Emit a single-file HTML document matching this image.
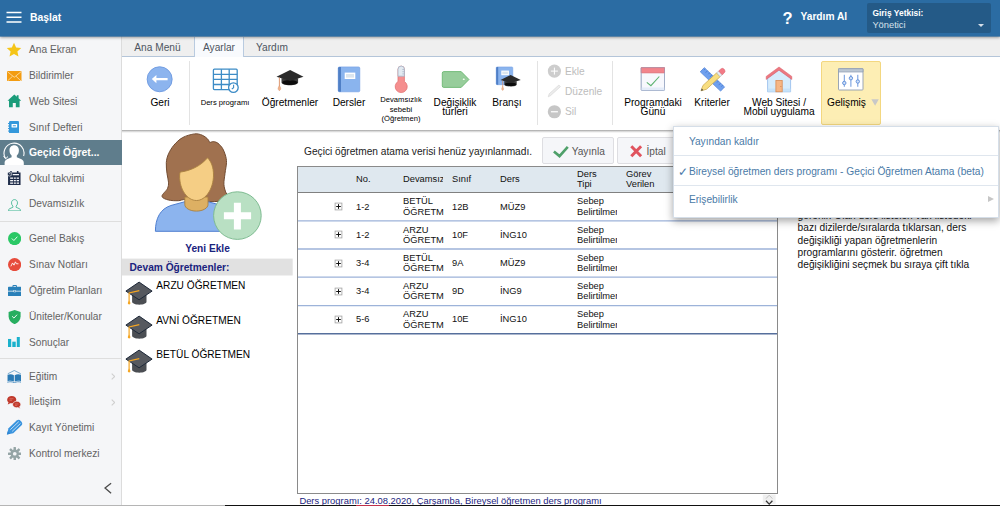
<!DOCTYPE html>
<html><head><meta charset="utf-8">
<style>
*{box-sizing:border-box;margin:0;padding:0}
html,body{width:1000px;height:506px;overflow:hidden;background:#fff;font-family:"Liberation Sans",Arial,sans-serif;font-size:12px;color:#000}
.abs{position:absolute}
#hdr{position:absolute;left:0;top:0;width:1000px;height:36px;background:#2b6ca3;box-shadow:0 1.6px 3px rgba(0,0,0,.4);z-index:5}
#hdr .t{position:absolute;left:30px;top:10.8px;font-weight:bold;font-size:12px;color:#fff;line-height:14px}
#side{position:absolute;left:0;top:36px;width:122px;height:469px;background:#f5f6f8;border-right:1px solid #dcdcdc}
.si{position:absolute;left:0;width:121px;height:26px;line-height:26px;color:#636363;font-size:12px;padding-left:29px;white-space:nowrap}
.si.sel{color:#fff;font-weight:bold;font-size:10.4px}
.si svg{position:absolute;left:6px;top:5px}
.sep{position:absolute;left:0;width:121px;height:1px;background:#dedede}
#tabs{position:absolute;left:122px;top:36px;width:878px;height:21px;background:#efefef;border-bottom:1px solid #b4c5d9}
.tab{position:absolute;top:1px;height:20px;line-height:21.6px;font-size:12px;color:#4d5560;text-align:center}
.tab.act{background:#f8fafd;border:1px solid #b9cbe0;border-top:none;border-bottom:none;height:21px}
#rib{position:absolute;left:122px;top:57px;width:878px;height:73.2px;background:#fff}
#ribsh{position:absolute;left:122px;top:130.2px;width:878px;height:3.2px;background:linear-gradient(to bottom,rgba(0,0,0,.36),rgba(0,0,0,.12) 55%,rgba(0,0,0,0))}
.rb{position:absolute;text-align:center;font-size:12px;line-height:9px;color:#000;white-space:nowrap}
.vs{position:absolute;top:61px;width:1px;height:64px;background:#e3e3e3}

body{font-size:10.17px}
.si{font-size:10.17px}
.tab{font-size:10.17px}
.rb{font-size:10.17px}
.rb.sm{font-size:7.63px}
.rb.dis{color:#bdbdbd}
#hdr .t{font-size:10.4px}
.btn{position:absolute;top:137.200px;height:27.200px;background:#f5f6f9;border:1px solid #dedee2;border-radius:2px;color:#555;line-height:12px}
#tbl{position:absolute;left:297px;top:166px;width:481px;height:328px;border:1px solid #8a8a8a;background:#fff;font-size:9.32px;line-height:10.2px;color:#111}
#tbl .th{position:absolute;left:0;top:0;width:479px;height:26px;background:#dfe8ef;border-bottom:1px solid #808080}
#tbl span{position:absolute;white-space:nowrap}
#tbl .tr{position:absolute;left:0;width:479px;height:28.24px}
#tbl .tr i{position:absolute;left:36.2px;top:9.400px;width:8px;height:8px;border:1px solid #a5a5a5;background:#fff}
#tbl .tr i:before{content:"";position:absolute;left:1px;top:2.5px;width:4px;height:1px;background:#222}
#tbl .tr i:after{content:"";position:absolute;left:2.5px;top:1px;width:1px;height:4px;background:#222}
#tbl .cl{width:40px;overflow:hidden}
#menu{position:absolute;left:673.3px;top:126px;width:326px;height:91.8px;background:#fff;border:1px solid #d5dee8;box-shadow:0 3px 8px rgba(0,0,0,.36);z-index:10;overflow:hidden}
.mi{position:absolute;left:0;width:326px;padding-left:14.6px;color:#4a7aa7;white-space:nowrap;font-size:10.2px}
</style></head><body>
<div id="hdr">
 <svg class="abs" style="left:6px;top:11px" width="16" height="13"><g stroke="#fff" stroke-width="1.6"><path d="M0.5 1.5h15M0.5 6.3h15M0.5 11h15"/></g></svg>
 <div class="t">Başlat</div>
 <div class="abs" style="left:782.6px;top:8.6px;color:#fff;font-weight:bold;font-size:16.5px;line-height:19px">?</div>
 <div class="abs" style="left:800.5px;top:11.4px;color:#fff;font-weight:bold;font-size:10.2px">Yardım Al</div>
 <div class="abs" style="left:867px;top:3px;width:124px;height:30px;background:#245a87;border-radius:2px"></div>
 <div class="abs" style="left:872.4px;top:7.6px;color:#fff;font-weight:bold;font-size:8.45px;line-height:10px">Giriş Yetkisi:</div>
 <div class="abs" style="left:872.4px;top:19.6px;color:#d7e2ec;font-size:9.32px;line-height:11px">Yönetici</div>
 <div class="abs" style="left:978px;top:23.8px;border-left:3.6px solid transparent;border-right:3.6px solid transparent;border-top:3.6px solid #d5dfe9;width:0;height:0"></div>
</div>
<div class="abs" style="left:0;top:36px;width:1000px;height:1px;background:rgba(43,108,163,.62);z-index:6"></div>
<div id="side">
<div class="abs" style="left:0;top:104px;width:122px;height:24.8px;background:#5f7d8c"></div>
 <div class="si" style="top:1.12px">Ana Ekran</div>
 <div class="si" style="top:26.82px">Bildirimler</div>
 <div class="si" style="top:52.92px">Web Sitesi</div>
 <div class="si" style="top:78.82px">Sınıf Defteri</div>
 <div class="si sel" style="top:104.42px">Geçici Öğret...</div>
 <div class="si" style="top:130.02px">Okul takvimi</div>
 <div class="si" style="top:155.42px">Devamsızlık</div>
 <div class="sep" style="top:185px"></div>
 <div class="si" style="top:190.37px">Genel Bakış</div>
 <div class="si" style="top:216.02px">Sınav Notları</div>
 <div class="si" style="top:242.02px">Öğretim Planları</div>
 <div class="si" style="top:267.72px">Üniteler/Konular</div>
 <div class="si" style="top:293.82px">Sonuçlar</div>
 <div class="sep" style="top:322px"></div>
 <div class="si" style="top:327.87px">Eğitim</div>
 <div class="si" style="top:352.92px">İletişim</div>
 <div class="si" style="top:379.02px">Kayıt Yönetimi</div>
 <div class="si" style="top:404.72px">Kontrol merkezi</div>
<svg class="abs" style="left:6.1px;top:6.1px" width="16" height="15.5" viewBox="0 0 24 23" preserveAspectRatio="none"><path d="M12 1.2l3.2 7 7.6.8-5.7 5.1 1.6 7.5L12 17.8 5.3 21.6l1.6-7.5L1.2 9l7.6-.8z" fill="#f5c518"/></svg>
<svg class="abs" style="left:7px;top:34.5px" width="14.5" height="10.5" viewBox="0 0 29 21"><rect width="29" height="21" rx="1.5" fill="#f39c12"/><path d="M1 1.5l13.5 11L28 1.5M1 20l10-9.5M28 20l-10-9.5" stroke="#fde3b5" stroke-width="1.6" fill="none"/></svg>
<svg class="abs" style="left:6.8px;top:58.3px" width="14.6" height="13.8" viewBox="0 0 29 26" preserveAspectRatio="none"><path d="M14.5 1L1 12.5h3V25h7.5v-8h6v8H25V12.5h3L23 8.2V2.5h-3.5v2.7z" fill="#1a9c7a"/></svg>
<svg class="abs" style="left:8.3px;top:84.6px" width="11.2" height="12.6" viewBox="0 0 22 25" preserveAspectRatio="none"><rect x="2" y="0" width="20" height="25" rx="2.5" fill="#3498db"/><rect x="0" y="4" width="3" height="2" fill="#3498db"/><rect x="0" y="9" width="3" height="2" fill="#3498db"/><rect x="0" y="14" width="3" height="2" fill="#3498db"/><rect x="0" y="19" width="3" height="2" fill="#3498db"/><rect x="7" y="6" width="11" height="7" rx="1" fill="#fff"/><rect x="9.5" y="8.5" width="6" height="2" fill="#3498db"/></svg>
<svg class="abs" style="left:6.7px;top:135px" width="14.6" height="14.5" viewBox="0 0 28 29" preserveAspectRatio="none"><path d="M2 3h24v25H2z" fill="#1f2d4a"/><rect x="6" y="0" width="3" height="6" fill="#1f2d4a"/><rect x="19" y="0" width="3" height="6" fill="#1f2d4a"/><circle cx="5" cy="6" r="4.2" fill="#1f2d4a" stroke="#f5f6f8" stroke-width="1.2"/><path d="M5 3.5V6h2.2" stroke="#f5f6f8" stroke-width="1.1" fill="none"/><g fill="#f5f6f8"><rect x="11" y="6" width="12" height="2.5"/><rect x="6" y="13" width="17" height="2.6"/><rect x="6" y="18" width="17" height="2.6"/><rect x="6" y="23" width="17" height="2.6"/></g><g fill="#1f2d4a"><rect x="11.5" y="12" width="1.5" height="15"/><rect x="17" y="12" width="1.5" height="15"/></g></svg>
<svg class="abs" style="left:8px;top:162.5px" width="13" height="12.5" viewBox="0 0 26 25"><path d="M13 1.2c-3.6 0-6 2.8-6 6.6 0 2.600 1 5 2.800 6.400v2.300L3 19.500c-1.200.6-1.800 1.500-1.800 2.800v1.500h23.600v-1.500c0-1.300-.6-2.200-1.800-2.800l-6.800-3v-2.300c1.800-1.400 2.800-3.800 2.800-6.400 0-3.800-2.400-6.600-6-6.600z" fill="none" stroke="#3db590" stroke-width="1.7"/></svg>
<svg class="abs" style="left:7.5px;top:196px" width="13.2" height="13.2" viewBox="0 0 24 24"><circle cx="12" cy="12" r="12" fill="#2bc866"/><path d="M7.500 12.300l3.200 3.200 5.800-6.400" stroke="#fff" stroke-width="1.600" fill="none" stroke-linecap="round" stroke-linejoin="round"/></svg>
<svg class="abs" style="left:7.5px;top:221.5px" width="13.2" height="13.2" viewBox="0 0 24 24"><circle cx="12" cy="12" r="12" fill="#e74c3c"/><path d="M5.500 14.500l2.800-5.500 2.700 4 2.500-6 1.800 3.500h3" stroke="#fff" stroke-width="1.600" fill="none" stroke-linejoin="round" stroke-linecap="round"/><text x="6.500" y="17.500" font-size="9" font-family="Liberation Sans" font-weight="bold" fill="#fff"></text></svg>
<svg class="abs" style="left:7.5px;top:248.5px" width="13.4" height="11.5" viewBox="0 0 27 23"><path d="M9 3.500V1.800C9 .8 9.800 0 10.800 0h5.400c1 0 1.800.8 1.800 1.800v1.700h7c1.100 0 2 .9 2 2V21c0 1.100-.9 2-2 2H2c-1.100 0-2-.9-2-2V5.500c0-1.100.9-2 2-2zm2 0h5V2h-5z" fill="#2980b9"/><rect x="0" y="11.500" width="27" height="1.600" fill="#f5f6f8"/><rect x="11" y="10" width="5" height="4.500" rx="1" fill="#f5f6f8"/><rect x="12" y="11" width="3" height="2.500" fill="#2980b9"/></svg>
<svg class="abs" style="left:7.5px;top:273.5px" width="13.2" height="14.2" viewBox="0 0 24 26"><path d="M12 0l11 3.800v7.500c0 7-4.500 11.700-11 14.700C5.500 23 1 18.300 1 11.300V3.800z" fill="#27ae60"/><path d="M8 12l2.800 2.800 5.200-5.600" stroke="#fff" stroke-width="1.700" fill="none" stroke-linecap="round" stroke-linejoin="round"/></svg>
<svg class="abs" style="left:8.2px;top:300.6px" width="11.8" height="10.8" preserveAspectRatio="none" viewBox="0 0 22 22"><rect x="0" y="4" width="6" height="18" fill="#1ab1cc"/><rect x="8" y="9.500" width="6.400" height="12.500" fill="#1ab1cc"/><rect x="16.400" y="0" width="5.600" height="22" fill="#1ab1cc"/></svg>
<svg class="abs" style="left:6.8px;top:333.5px" width="14.6" height="13.5" viewBox="0 0 29 27"><path d="M14.500 1L1.500 7.500" stroke="#2a7ab5" stroke-width="1.200" fill="none"/><path d="M14.500 1l13 6.500" stroke="#2a7ab5" stroke-width="1.200" fill="none"/><path d="M1 9.500c4.500-1.800 9-1.500 12.700.8v12.500C10 21 5.500 20.800 1 22.300z" fill="#2a7ab5"/><path d="M28 9.500c-4.500-1.800-9-1.500-12.700.8v12.500c3.700-1.800 8.200-2 12.700-.5z" fill="#2a7ab5"/><path d="M0.500 24.500c5-1.600 9.500-1.300 14 .9 4.500-2.200 9-2.500 14-.9" stroke="#2a7ab5" stroke-width="1.500" fill="none"/></svg>
<svg class="abs" style="left:7.3px;top:359.8px" width="14.2" height="13.2" viewBox="0 0 28.500 26.500"><path d="M9.500 0C4.300 0 .3 3.300.3 7.400c0 2.100 1 4 2.700 5.300L1.500 17l5-2.600c1 .3 2 .4 3 .4 5.200 0 9.200-3.300 9.200-7.400S14.700 0 9.500 0z" fill="#c0392b"/><path d="M19.500 10.500c4.600 0 8.200 2.800 8.200 6.400 0 1.800-.9 3.400-2.400 4.600l1.300 4.200-4.500-2.400c-.8.200-1.700.3-2.600.3-4.600 0-8.200-2.800-8.200-6.400s3.600-6.700 8.200-6.700z" fill="#c0392b" stroke="#f5f6f8" stroke-width="1.300"/><g stroke="#e58a80" stroke-width="1.200"><path d="M5 5.500h8M5 8.500h5"/><path d="M16 16h7M16 18.800h4.500"/></g></svg>
<svg class="abs" style="left:5px;top:383px" width="18" height="17" viewBox="5 419 18 17"><g transform="translate(6.900 434.600) rotate(-43.600)"><path d="M0 0L5.500-3.400h11.200a2.800 3.400 0 0 1 0 6.800H5.500z" fill="#3a94de"/><path d="M6-1.200h11.500M6 1.300h11.500" stroke="#c4e0f7" stroke-width=".9" fill="none"/><path d="M0 0l3-1.850v3.700z" fill="#2f86d2"/></g></svg>
<svg class="abs" style="left:7.5px;top:410.5px" width="13.5" height="13.5" viewBox="0 0 24 24"><g fill="#95a5a6"><circle cx="12" cy="12" r="7.500"/><g id="t"><rect x="9.800" y="0" width="4.400" height="24" rx="1"/></g><rect x="9.800" y="0" width="4.400" height="24" rx="1" transform="rotate(45 12 12)"/><rect x="9.800" y="0" width="4.400" height="24" rx="1" transform="rotate(90 12 12)"/><rect x="9.800" y="0" width="4.400" height="24" rx="1" transform="rotate(135 12 12)"/></g><circle cx="12" cy="12" r="3.300" fill="#f5f6f8"/></svg>
<svg class="abs" style="left:110.5px;top:337.2px" width="4.5" height="7" viewBox="0 0 4.5 7"><path d="M.7.700l3 2.800-3 2.800" stroke="#cfcfcf" stroke-width="1.100" fill="none"/></svg>
<svg class="abs" style="left:110.5px;top:362.7px" width="4.5" height="7" viewBox="0 0 4.5 7"><path d="M.7.700l3 2.800-3 2.800" stroke="#cfcfcf" stroke-width="1.100" fill="none"/></svg>
<svg class="abs" style="left:103.5px;top:445px" width="9" height="15" viewBox="0 0 9 15"><path d="M7.100 2.200L1 7.100l6.100 5.200" stroke="#4a4a4a" stroke-width="1.300" fill="none"/></svg>
<svg class="abs" style="left:3px;top:104.5px" width="22" height="24.5" viewBox="0 0 22 24.5"><defs><clipPath id="cp"><rect x="0" y="0" width="22" height="24.300"/></clipPath></defs><g clip-path="url(#cp)"><path d="M2.600 17.500A10 10 0 1 1 20.600 15" fill="none" stroke="#fff" stroke-width="1.100"/><path d="M0.600 15.200l2 2.600 2.400-2.200" stroke="#fff" stroke-width="1" fill="none"/><path d="M11.200 4.200c-2.900 0-4.700 2.200-4.700 5.200 0 2.100.8 3.900 2.100 5v1.800l-4.700 2.100c-1.500.700-2.300 2-2.300 3.600v3h19.200v-3c0-1.600-.8-2.900-2.300-3.600l-4.700-2.100v-1.800c1.300-1.100 2.100-2.900 2.100-5 0-3-1.800-5.200-4.700-5.200z" fill="#fff"/></g></svg>
 </div>
<div id="tabs">
 <div class="tab" style="left:0;width:71px">Ana Menü</div>
 <div class="tab act" style="left:72px;width:50px">Ayarlar</div>
 <div class="tab" style="left:123px;width:54px">Yardım</div>
</div>
<div id="rib"></div><div id="ribsh"></div>
<!-- ribbon items -->
<div class="vs" style="left:189px"></div>
<div class="vs" style="left:537px"></div>
<div class="vs" style="left:612px"></div>
<div id="adv" class="abs" style="left:821px;top:61px;width:60px;height:64px;background:#fdeeb4;border:1px solid #f3d780;border-radius:2px"></div>
<svg class="abs" style="left:145px;top:65px" width="30" height="29" viewBox="145 65 30 29"><circle cx="159.650" cy="79.250" r="12.500" fill="#8cb4ee" stroke="#6c98e0" stroke-width=".9"/><path d="M151.800 79.100l4.600-4v3h11.200v2.100h-11.200v3z" fill="#fff"/></svg>
<svg class="abs" style="left:212px;top:67px" width="28" height="27" viewBox="212 67 28 27"><g fill="none" stroke="#3d8cc6" stroke-width="1.300"><rect x="213.400" y="69.200" width="23.800" height="20.400" rx="1"/><path d="M221.400 69.200v20.400M229.200 69.200v20.400M213.400 74.300h23.800M213.400 79.400h23.800M213.400 84.500h23.800"/></g><circle cx="233.400" cy="87.600" r="4.800" fill="#fff" stroke="#3d8cc6" stroke-width="1.300"/><path d="M233.600 84.800v3l-1.800 1.200" fill="none" stroke="#3d8cc6" stroke-width="1.100"/></svg>
<svg class="abs" style="left:275px;top:69px" width="30" height="23" viewBox="275 69 30 23"><g transform="translate(276.5 70.1) scale(1)"><path d="M5 8.200v4.300c0 1.500 3.600 2.700 8.300 2.700s8.300-1.200 8.300-2.700V8.200z" fill="#3a3a3a"/><ellipse cx="13.300" cy="12.400" rx="7.600" ry="2.400" fill="#0c0c0c"/><path d="M0 6.700L13.600 0 27 6.700 13.600 10.800z" fill="#2a2a2a"/><path d="M2.900 7.400v8.600" stroke="#d98d62" stroke-width=".9"/><path d="M2.900 15.500c-1 1.500-1.500 2.800-1.200 3.700l1.200 1.500 1.200-1.500c.3-.9-.2-2.200-1.200-3.700z" fill="#f0b48c" stroke="#d98d62" stroke-width=".5"/></g></svg>
<svg class="abs" style="left:337px;top:66px" width="24" height="27" viewBox="337 66 24 27"><rect x="338.200" y="66.900" width="21.600" height="24.900" rx="1.300" fill="#8ab4ee" stroke="#6f9be2" stroke-width=".6"/><path d="M338.200 68.200a1.300 1.300 0 0 1 1.300-1.300h1.500v24.900h-1.500a1.300 1.300 0 0 1-1.300-1.300z" fill="#4f7fc6"/><rect x="344.700" y="72.600" width="10.600" height="6.400" fill="#fff"/><rect x="346" y="74" width="8" height="3.600" fill="#dbe5ee"/></svg>
<svg class="abs" style="left:394px;top:65px" width="15" height="29" viewBox="394 65 15 29"><path d="M398 69.300a3.200 3.200 0 0 1 6.400 0v12.200a6 6 0 1 1-6.400 0z" fill="#f58f8f" stroke="#e27474" stroke-width=".8"/><path d="M398 76.200V69.300a3.200 3.200 0 0 1 6.400 0v6.900z" fill="#e3eaf1" stroke="#a3b4c6" stroke-width=".8"/><path d="M402.300 69.500h2M402.300 71.700h2M402.300 73.900h2" stroke="#a3b4c6" stroke-width=".7"/></svg>
<svg class="abs" style="left:441px;top:70px" width="30" height="19" viewBox="441 70 30 19"><path d="M443.800 71.600h17.400l7.800 7.900-7.800 7.900h-17.400a1.500 1.500 0 0 1-1.500-1.500v-12.800a1.500 1.500 0 0 1 1.500-1.500z" fill="#97cd9b" stroke="#6db873" stroke-width=".9" stroke-linejoin="round"/><circle cx="463.800" cy="79.300" r="1.300" fill="#f4fbf4" stroke="#6db873" stroke-width=".5"/></svg>
<svg class="abs" style="left:495px;top:66px" width="27" height="26" viewBox="495 66 27 26"><rect x="496.200" y="66.900" width="16.600" height="17.800" rx="1" fill="#8ab4ee" stroke="#6f9be2" stroke-width=".5"/><path d="M496.200 67.900a1 1 0 0 1 1-1h1v17.800h-1a1 1 0 0 1-1-1z" fill="#4f7fc6"/><rect x="501.300" y="70.600" width="7.600" height="4.600" fill="#fff"/><rect x="502.300" y="71.600" width="5.600" height="2.600" fill="#dbe5ee"/><g transform="translate(500.5 75) scale(0.75)"><path d="M5 8.200v4.300c0 1.500 3.600 2.700 8.300 2.700s8.300-1.200 8.300-2.700V8.200z" fill="#3a3a3a"/><ellipse cx="13.300" cy="12.400" rx="7.600" ry="2.400" fill="#0c0c0c"/><path d="M0 6.700L13.600 0 27 6.700 13.600 10.800z" fill="#2a2a2a"/><path d="M2.900 7.400v8.600" stroke="#d98d62" stroke-width=".9"/><path d="M2.900 15.500c-1 1.500-1.500 2.800-1.200 3.700l1.200 1.500 1.200-1.500c.3-.9-.2-2.200-1.200-3.700z" fill="#f0b48c" stroke="#d98d62" stroke-width=".5"/></g></svg>
<svg class="abs" style="left:547px;top:64px" width="15" height="15" viewBox="547 64 15 15"><circle cx="554.400" cy="71.100" r="6.600" fill="#cdcdcd"/><path d="M554.400 67.600v7M550.900 71.100h7" stroke="#fff" stroke-width="1"/></svg>
<svg class="abs" style="left:547px;top:84px" width="15" height="14" viewBox="547 84 15 14"><path d="M548.300 96.800l.9-3 9.700-8.800 1.500 1.700-9.700 8.800z" fill="#ececec" stroke="#d4d4d4" stroke-width=".6" stroke-linejoin="round"/></svg>
<svg class="abs" style="left:547px;top:105px" width="15" height="15" viewBox="547 105 15 15"><circle cx="554.400" cy="111.750" r="6.600" fill="#c6c6c6"/><path d="M550.900 111.750h7" stroke="#fff" stroke-width="1.200"/></svg>
<svg class="abs" style="left:640px;top:66px" width="26" height="26" viewBox="640 66 26 26"><rect x="641.200" y="67.600" width="23.300" height="22.900" rx=".8" fill="#f7f8fd" stroke="#9dabc6" stroke-width=".9"/><rect x="641.200" y="87.500" width="23.300" height="3" fill="#dfe9f7" opacity=".8"/><path d="M641.200 67.600h23.300v5.200h-23.300z" fill="#f2848c" stroke="#dd6872" stroke-width=".8"/><path d="M646.800 82.400l4.100 3.300 8.400-9.200" fill="none" stroke="#5cb270" stroke-width="1.100"/><rect x="641.200" y="67.600" width="23.300" height="22.900" rx=".8" fill="none" stroke="#9dabc6" stroke-width=".5"/></svg>
<svg class="abs" style="left:698px;top:65px" width="30" height="29" viewBox="698 65 30 29"><g transform="rotate(43.500 712.500 79.300)"><rect x="698.500" y="76.500" width="28" height="5.800" fill="#6fa0ee" stroke="#4c80d8" stroke-width=".7"/><path d="M700 76.500v2M703 76.500v2.800M706 76.500v2M709 76.500v2.800M712 76.500v2M715 76.500v2.800M718 76.500v2M721 76.500v2.800M724 76.500v2" stroke="#3f6fc4" stroke-width=".6"/></g><g transform="rotate(-42.600 712.500 80.200)"><path d="M696.800 80.200l5.200-2.600h18.500v5.200h-18.500z" fill="#f8de80" stroke="#c9a74c" stroke-width=".7" stroke-linejoin="round"/><path d="M696.800 80.200l2.200-1.100v2.200z" fill="#444"/><rect x="720.500" y="77.600" width="2.800" height="5.200" fill="#e8eef4" stroke="#a8b4c0" stroke-width=".5"/><path d="M723.300 77.600h2.600a2.600 2.600 0 0 1 0 5.200h-2.600z" fill="#f27a86" stroke="#d95a68" stroke-width=".5"/></g></svg>
<svg class="abs" style="left:765px;top:64px" width="28" height="29" viewBox="765 64 28 29"><path d="M767.600 78.200L779 69.500l11.600 8.700v13.600h-23z" fill="#d6ecfc" stroke="#8fb8ea" stroke-width=".8"/><rect x="767.600" y="88.600" width="23" height="3.200" fill="#c2e0f8" opacity=".8"/><rect x="775.900" y="80.500" width="6.300" height="11.300" fill="#f6b684" stroke="#d98b52" stroke-width=".8"/><circle cx="780.900" cy="86.500" r=".5" fill="#c87840"/><path d="M766.200 79.500v-3.100L779 67l12.800 9.400v3.100L779 70.200z" fill="#ec7880" stroke="#d85a66" stroke-width=".5" stroke-linejoin="round"/></svg>
<svg class="abs" style="left:837px;top:67px" width="28" height="25" viewBox="837 67 28 25"><rect x="838.500" y="68.700" width="24.500" height="21.300" rx=".8" fill="#fff" stroke="#8e9cb2" stroke-width=".9"/><path d="M838.500 68.700h24.500v3.300h-24.500z" fill="#bcc7d3" stroke="#8e9cb2" stroke-width=".7"/><g stroke="#5b8bd8" stroke-width=".9"><path d="M844.300 74.800v12M850.900 74.800v12M857.800 74.800v12"/><circle cx="844.300" cy="83" r="1.700" fill="#cfe0f8"/><circle cx="850.900" cy="78.200" r="1.700" fill="#cfe0f8"/><circle cx="857.800" cy="81.500" r="1.700" fill="#cfe0f8"/></g></svg>
<div class="rb" style="left:130px;width:60px;top:98px">Geri</div>
<div class="rb sm" style="left:195px;width:60px;top:98.3px">Ders programı</div>
<div class="rb" style="left:250px;width:80px;top:98px">Öğretmenler</div>
<div class="rb" style="left:319px;width:60px;top:98px">Dersler</div>
<div class="rb sm" style="left:371px;width:60px;top:95.3px;line-height:9.4px">Devamsızlık<br>sebebi<br>(Öğretmen)</div>
<div class="rb" style="left:425px;width:60px;top:98.2px;line-height:9px">Değişiklik<br>türleri</div>
<div class="rb" style="left:477px;width:60px;top:98px">Branşı</div>
<div class="rb dis" style="left:565px;top:66.5px;text-align:left">Ekle</div>
<div class="rb dis" style="left:565px;top:87px;text-align:left">Düzenle</div>
<div class="rb dis" style="left:565px;top:107.4px;text-align:left">Sil</div>
<div class="rb" style="left:613px;width:80px;top:98.2px;line-height:9px">Programdaki<br>Günü</div>
<div class="rb" style="left:682px;width:60px;top:98px">Kriterler</div>
<div class="rb" style="left:729px;width:100px;top:98.2px;line-height:9px">Web Sitesi /<br>Mobil uygulama</div>
<div class="rb" style="left:827px;top:98px;text-align:left">Gelişmiş</div>
<svg class="abs" style="left:870px;top:98px" width="10" height="9" viewBox="870 98 10 9"><path d="M871.400 99.300h7.400l-3.700 6.500z" fill="#c8c8c8"/></svg>

<!-- left panel -->
<svg class="abs" style="left:150px;top:130px" width="120" height="112" viewBox="150 130 120 112">
<path d="M209.8 142.6C210.4 142.4 212.1 141.5 213.5 141.6C214.9 141.7 216.5 142.2 218.0 143.3C219.5 144.4 221.3 146.4 222.5 148.3C223.7 150.2 224.6 152.6 225.3 155.0C226.0 157.4 226.6 159.5 226.5 162.6C226.4 165.7 225.4 169.9 225.0 173.5C224.6 177.1 223.7 181.1 223.9 184.3C224.1 187.6 225.1 190.7 226.1 193.0C227.1 195.3 230.7 196.7 230.0 198.0C229.3 199.3 226.2 200.4 222.0 201.0C217.8 201.6 211.0 201.8 205.0 201.5C199.0 201.2 190.4 199.6 186.0 199.5C181.6 199.4 181.2 200.6 178.3 200.7C175.4 200.8 171.2 200.7 168.5 200.0C165.8 199.3 162.2 198.2 162.0 196.3C161.8 194.4 166.3 191.0 167.4 188.7C168.5 186.3 168.6 184.7 168.5 182.2C168.4 179.7 167.4 176.8 167.0 173.5C166.6 170.2 166.1 165.9 166.3 162.6C166.6 159.3 167.2 156.8 168.5 153.9C169.8 151.0 171.6 147.9 173.9 145.2C176.2 142.5 179.2 139.5 182.6 137.6C186.0 135.7 191.3 134.3 194.6 133.9C197.9 133.5 200.1 134.4 202.2 135.2C204.3 136.0 205.9 137.4 207.2 138.6C208.5 139.8 209.4 141.9 209.8 142.6z" fill="#a0714f" stroke="#714b31" stroke-width="1"/>
<path d="M155.400 231.300c0-13 5-22.500 15.500-25.800l14-3.800h23l14 3.800c10.500 3.300 15.500 12.800 15.500 25.800z" fill="#8cb4ee" stroke="#4f7fd0" stroke-width="1"/>
<path d="M184.800 197v7.500c0 3.500 5 6.600 11.600 6.600s11.600-3.100 11.600-6.600V197z" fill="#ddb063" stroke="#a9803f" stroke-width=".9"/>
<path d="M179.600 176c0-1.500.2-2.800.6-3.900 10-1.300 20.500-6 27.300-14.300 3.800 3.800 6 9.500 6 17.200 0 14-8 25.500-17 25.500s-16.900-10.500-16.900-24.500z" fill="#f5ce85" stroke="#a9803f" stroke-width=".9"/>
<circle cx="237.400" cy="215.600" r="23.800" fill="#b9e0c3" stroke="#7fbc92" stroke-width="1"/>
<path d="M233.900 202.800h7v9.500h10.200v7h-10.200v10.300h-7v-10.300h-10v-7h10z" fill="#fff"/>
</svg>
<div class="abs b" style="left:157.5px;width:100px;top:243px;text-align:center;color:#1a237e;font-weight:bold;line-height:12px">Yeni Ekle</div>
<svg class="abs" style="left:122px;top:258px" width="172" height="19" viewBox="122 258 172 19"><rect x="122" y="258.600" width="170.700" height="16.900" fill="#e1e1e1"/></svg>
<div class="abs" style="left:129.5px;top:261.8px;color:#1a237e;font-weight:bold;line-height:12px">Devam Öğretmenler:</div>
<svg class="abs" style="left:124px;top:280px" width="30" height="26" viewBox="124 280 30 26"><path d="M132.100 294v7.800c0 1.600 3.200 2.900 7.200 2.900s7.200-1.300 7.200-2.900V294z" fill="#4b4e53"/><path d="M125.900 291.100l13.200-9 13 9-13 8.700z" fill="#56595f" stroke="#1f2a3a" stroke-width="1" stroke-linejoin="round"/><path d="M139.300 290.700l-10.200 2.200v8.500" fill="none" stroke="#f5a623" stroke-width="1.200"/><path d="M129.100 300.500c-1 1.200-1.400 2.200-1.200 3l1.200 1.300 1.200-1.300c.2-.8-.2-1.800-1.200-3z" fill="#f5a623"/></svg>
<svg class="abs" style="left:124px;top:314.2px" width="30" height="26" viewBox="124 280 30 26"><path d="M132.100 294v7.800c0 1.600 3.200 2.900 7.200 2.900s7.200-1.300 7.200-2.900V294z" fill="#4b4e53"/><path d="M125.900 291.100l13.200-9 13 9-13 8.700z" fill="#56595f" stroke="#1f2a3a" stroke-width="1" stroke-linejoin="round"/><path d="M139.300 290.700l-10.200 2.200v8.500" fill="none" stroke="#f5a623" stroke-width="1.200"/><path d="M129.100 300.500c-1 1.200-1.400 2.200-1.200 3l1.200 1.300 1.200-1.300c.2-.8-.2-1.800-1.200-3z" fill="#f5a623"/></svg>
<svg class="abs" style="left:124px;top:348.4px" width="30" height="26" viewBox="124 280 30 26"><path d="M132.100 294v7.800c0 1.600 3.200 2.900 7.200 2.900s7.200-1.300 7.200-2.900V294z" fill="#4b4e53"/><path d="M125.900 291.100l13.200-9 13 9-13 8.700z" fill="#56595f" stroke="#1f2a3a" stroke-width="1" stroke-linejoin="round"/><path d="M139.300 290.700l-10.200 2.200v8.500" fill="none" stroke="#f5a623" stroke-width="1.200"/><path d="M129.100 300.500c-1 1.200-1.400 2.200-1.200 3l1.200 1.300 1.200-1.300c.2-.8-.2-1.800-1.200-3z" fill="#f5a623"/></svg>
<div class="abs" style="left:156.3px;top:280.3px;line-height:12px">ARZU ÖĞRETMEN</div>
<div class="abs" style="left:156.3px;top:314.5px;line-height:12px">AVNİ ÖĞRETMEN</div>
<div class="abs" style="left:156.3px;top:348.7px;line-height:12px">BETÜL ÖĞRETMEN</div>

<!-- center -->
<div class="abs" style="left:304px;top:145.6px;line-height:12px;color:#222">Geçici öğretmen atama verisi henüz yayınlanmadı.</div>
<div class="btn" style="left:542px;width:71.700px"><svg class="abs" style="left:9px;top:7px" width="17" height="13" viewBox="551 144.500 17 13"><path d="M552.900 150.900l5.600 4.700 8.300-9.300" fill="none" stroke="#4fa06a" stroke-width="2.600"/></svg><span style="position:absolute;left:28.700px;top:8px">Yayınla</span></div>
<div class="btn" style="left:617.300px;width:72px"><svg class="abs" style="left:10.700px;top:6px" width="15" height="15" viewBox="628 143.500 15 15"><path d="M630.300 145.800l9.800 10M640.100 145.800l-9.800 10" fill="none" stroke="#e0535e" stroke-width="3"/></svg><span style="position:absolute;left:28.200px;top:8px">İptal</span></div>
<div id="tbl">
<svg class="abs" style="left:0;top:0" width="479" height="180" viewBox="298 167 479 180"><g stroke="#9db3d9" stroke-width="1.350"><path d="M298 220.900h479M298 249h479M298 277.100h479M298 305.600h479"/></g><path d="M298 333.800h479" stroke="#566f9c" stroke-width="1.500"/></svg>
 <div class="th">
  <span style="left:58px;top:6.9px">No.</span><span style="left:105px;top:6.9px;width:40px;overflow:hidden">Devamsız</span><span style="left:154px;top:6.9px">Sınıf</span><span style="left:202px;top:6.9px">Ders</span><span style="left:279px;top:1.8px">Ders<br>Tipi</span><span style="left:328px;top:1.8px">Görev<br>Verilen</span>
 </div>
 <div class="tr" style="top:26.30px"><svg class="abs" style="left:35.700px;top:8.900px" width="9" height="9" viewBox="0 0 9 9"><rect x="1.1" y="1.1" width="6.800" height="6.800" fill="#fff" stroke="#aaa" stroke-width=".9"/><path d="M2.200 4.500h4.600M4.500 2.200v4.600" stroke="#111" stroke-width="1"/></svg><span style="left:58px;top:9.2px">1-2</span><span style="left:105px;top:3.1px">BETÜL<br>ÖĞRETM</span><span style="left:154px;top:9.2px">12B</span><span style="left:202px;top:9.2px">MÜZ9</span><span class="cl" style="left:279px;top:3.1px">Sebep<br>Belirtilmemiş</span></div>
 <div class="tr" style="top:54.54px"><svg class="abs" style="left:35.700px;top:8.900px" width="9" height="9" viewBox="0 0 9 9"><rect x="1.1" y="1.1" width="6.800" height="6.800" fill="#fff" stroke="#aaa" stroke-width=".9"/><path d="M2.200 4.500h4.600M4.500 2.200v4.600" stroke="#111" stroke-width="1"/></svg><span style="left:58px;top:8.2px">1-2</span><span style="left:105px;top:3.1px">ARZU<br>ÖĞRETM</span><span style="left:154px;top:8.2px">10F</span><span style="left:202px;top:8.2px">İNG10</span><span class="cl" style="left:279px;top:3.1px">Sebep<br>Belirtilmemiş</span></div>
 <div class="tr" style="top:82.78px"><svg class="abs" style="left:35.700px;top:8.900px" width="9" height="9" viewBox="0 0 9 9"><rect x="1.1" y="1.1" width="6.800" height="6.800" fill="#fff" stroke="#aaa" stroke-width=".9"/><path d="M2.200 4.500h4.600M4.500 2.200v4.600" stroke="#111" stroke-width="1"/></svg><span style="left:58px;top:8.2px">3-4</span><span style="left:105px;top:3.1px">BETÜL<br>ÖĞRETM</span><span style="left:154px;top:8.2px">9A</span><span style="left:202px;top:8.2px">MÜZ9</span><span class="cl" style="left:279px;top:3.1px">Sebep<br>Belirtilmemiş</span></div>
 <div class="tr" style="top:111.02px"><svg class="abs" style="left:35.700px;top:8.900px" width="9" height="9" viewBox="0 0 9 9"><rect x="1.1" y="1.1" width="6.800" height="6.800" fill="#fff" stroke="#aaa" stroke-width=".9"/><path d="M2.200 4.500h4.600M4.500 2.200v4.600" stroke="#111" stroke-width="1"/></svg><span style="left:58px;top:8.2px">3-4</span><span style="left:105px;top:3.1px">ARZU<br>ÖĞRETM</span><span style="left:154px;top:8.2px">9D</span><span style="left:202px;top:8.2px">İNG9</span><span class="cl" style="left:279px;top:3.1px">Sebep<br>Belirtilmemiş</span></div>
 <div class="tr" style="top:139.26px"><svg class="abs" style="left:35.700px;top:8.900px" width="9" height="9" viewBox="0 0 9 9"><rect x="1.1" y="1.1" width="6.800" height="6.800" fill="#fff" stroke="#aaa" stroke-width=".9"/><path d="M2.200 4.500h4.600M4.500 2.200v4.600" stroke="#111" stroke-width="1"/></svg><span style="left:58px;top:8.2px">5-6</span><span style="left:105px;top:3.1px">ARZU<br>ÖĞRETM</span><span style="left:154px;top:8.2px">10E</span><span style="left:202px;top:8.2px">İNG10</span><span class="cl" style="left:279px;top:3.1px">Sebep<br>Belirtilmemiş</span></div>
</div>
<div class="abs" style="left:299.4px;top:495.8px;font-size:9.38px;line-height:11px;color:#1a237e;white-space:nowrap">Ders programı: 24.08.2020, Çarşamba, Bireysel öğretmen ders programı</div>

<svg class="abs" style="left:762px;top:494px" width="14" height="11" viewBox="762 494 14 11"><rect x="762.800" y="494.600" width="12.800" height="9.200" fill="#efefef"/><path d="M766 498.600l3.200-3.400 3.200 3.400" fill="none" stroke="#c2c2c2" stroke-width="1"/><path d="M766 500.800l3.200 3.300 3.200-3.300" fill="none" stroke="#333" stroke-width="1.300"/></svg>
<!-- right help -->
<div class="abs" style="left:797.6px;top:210.1px;width:200px;line-height:12.2px;color:#111;white-space:nowrap">görenir. Olan ders listelen var. listedeki<br>bazı dizilerde/sıralarda tıklarsan, ders<br>değişikliği yapan öğretmenlerin<br>programlarını gösterir. öğretmen<br>değişikliğini seçmek bu sıraya çift tıkla</div>

<!-- dropdown -->
<div id="menu">
 <div class="mi" style="top:0;height:28px;line-height:29.6px">Yayından kaldır</div>
 <div class="mi" style="top:28px;height:30px;line-height:31px;border-top:1px solid #dfe6ee"><span style="position:absolute;left:3.800px;top:.5px;font-size:12px">✓</span>Bireysel öğretmen ders programı - Geçici Öğretmen Atama (beta)</div>
 <div class="mi" style="top:58px;height:32px;line-height:28.400px;border-top:1px solid #dfe6ee">Erişebilirlik</div>
 <div class="abs" style="left:313.600px;top:68.800px;width:0;height:0;border-top:3.300px solid transparent;border-bottom:3.300px solid transparent;border-left:6.400px solid #c6c6c6"></div>
</div>
<div class="abs" style="left:0;top:505px;width:225px;height:1px;background:#b5b5b5"></div>
<div class="abs" style="left:225px;top:505px;width:775px;height:1px;background:#111"></div>
<div class="abs" style="left:356px;top:505px;width:33px;height:1px;background:#c0304a"></div>
</body></html>
